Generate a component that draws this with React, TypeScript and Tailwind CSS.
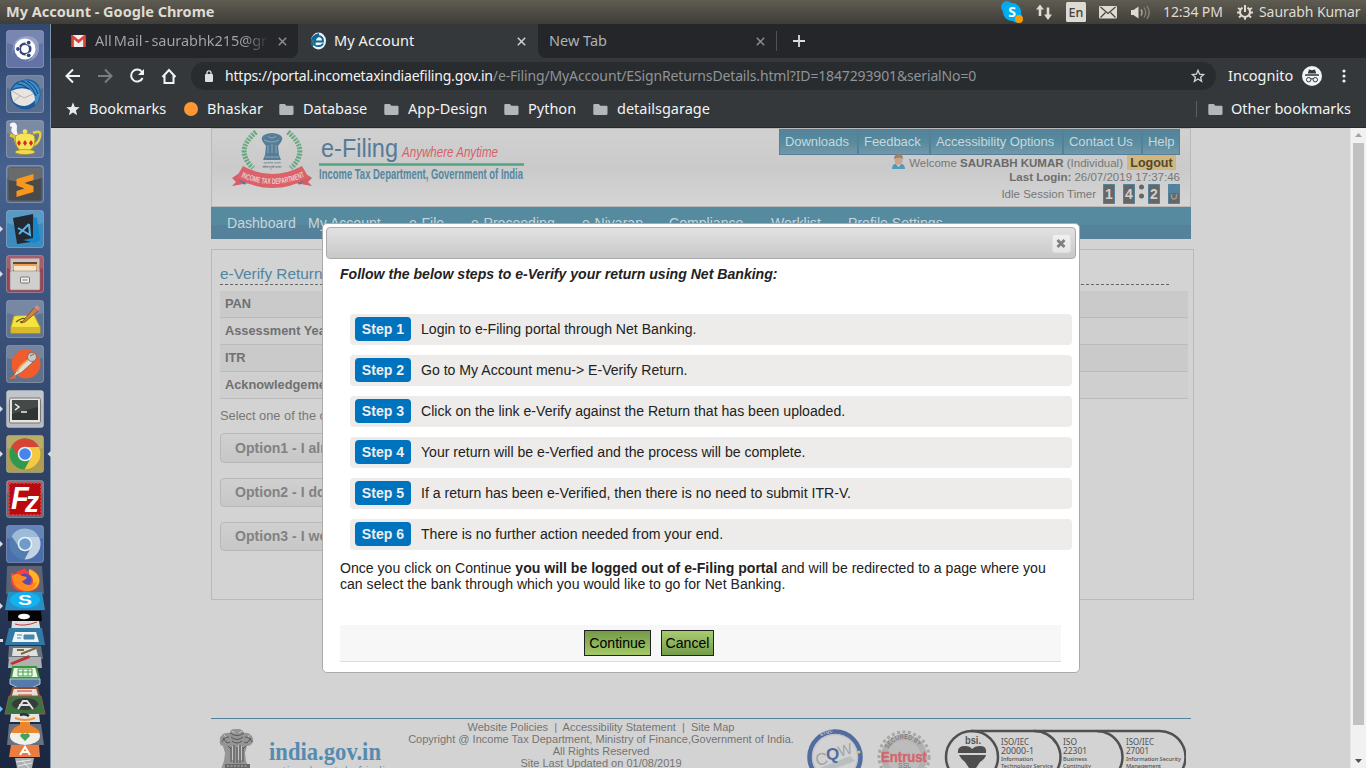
import React from "react";

const ui = "font-['Noto_Sans',sans-serif]";

function Folder() {
  return (
    <svg width="15" height="13" viewBox="0 0 15 13" className="shrink-0">
      <path d="M1.5 1h4.3l1.6 1.7h5.9c.7 0 1.2.5 1.2 1.2v6.9c0 .7-.5 1.2-1.2 1.2H1.5C.8 12 .3 11.500.3 10.800V2.200C.3 1.500.8 1 1.500 1z" fill="#b5b6b8" />
    </svg>
  );
}

function TabClose({ dim }: { dim?: boolean }) {
  return (
    <svg width="9" height="9" viewBox="0 0 9 9" className="shrink-0">
      <path d="M.8.8l7.400 7.400M8.200.8L.8 8.200" stroke={dim ? "#8b8d90" : "#d0d2d4"} strokeWidth="1.500" />
    </svg>
  );
}

function SystemBar() {
  return (
    <header className={`flex h-6 shrink-0 items-center bg-linear-to-b from-[#5f5c52] to-[#3e3d38] text-[#dfdbd2] ${ui}`}>
      <div className="w-[1001px] pl-[6px] text-[14.500px] font-bold">My Account - Google Chrome</div>
      <svg width="162" height="24" viewBox="1001 0 162 24" className="shrink-0">
        <circle cx="1007" cy="7" r="6" fill="#0aa5e8" />
        <circle cx="1016.500" cy="17" r="5.500" fill="#0aa5e8" />
        <circle cx="1012" cy="12" r="9" fill="#00aff0" />
        <text x="1012" y="17" textAnchor="middle" fontFamily="Noto Sans, sans-serif" fontWeight="700" fontSize="14" fill="#fff">S</text>
        <circle cx="1019" cy="19" r="4" fill="#f79a0b" />
        <path d="M1036 9.500l4-5 4 5h-2.700V16h-2.600V9.500zM1044 14.500h2.700V7.500h2.600v7h2.700l-4 5.500z" fill="#dfdbd2" />
        <rect x="1066" y="2" width="20" height="20" rx="1.500" fill="#dfdbd2" />
        <text x="1076" y="17" textAnchor="middle" fontFamily="Noto Sans, sans-serif" fontSize="12.500" fontWeight="500" fill="#45433d">En</text>
        <rect x="1099" y="6" width="18" height="12.500" rx="1" fill="#dfdbd2" />
        <path d="M1100.500 7l7.500 6.500 7.500-6.500M1100.500 17.500l5-5M1115.500 17.500l-5-5" fill="none" stroke="#45433d" strokeWidth="1.200" />
        <path d="M1131 10h2.500l5-3.500v12l-5-3.500H1131z" fill="#dfdbd2" />
        <path d="M1141 9.500q2 3 0 6" fill="none" stroke="#aaa79f" strokeWidth="1.500" />
        <path d="M1144 7.500q3.500 5 0 10M1147 6q4.500 6.500 0 13" fill="none" stroke="#85827a" strokeWidth="1.300" />
      </svg>
      <div className="w-[74px] whitespace-nowrap pb-[2px] text-[14px] tracking-[-0.100px]">12:34 PM</div>
      <svg width="16" height="16" viewBox="0 0 16 16" className="shrink-0">
        <path d="M5.500 3.600a5 5 0 1 0 5 0" fill="none" stroke="#dfdbd2" strokeWidth="2" />
        <path d="M8 1v7M1 4l2.500 1.500M15 4l-2.500 1.500M0 8.500h3M16 8.500h-3M2 13.500l2.200-2M14 13.500l-2.200-2M8 15.800v-3" fill="none" stroke="#dfdbd2" strokeWidth="2" />
      </svg>
      <div className="ml-[6px] whitespace-nowrap pb-[2px] text-[14px] tracking-[-0.070px]">Saurabh Kumar</div>
    </header>
  );
}

function Tile({ bg, children, mark, active }: { bg: string; children: React.ReactNode; mark?: boolean; active?: boolean }) {
  return (
    <div className="flex h-[38px] w-[51px] shrink-0 items-center">
      <svg width="51" height="38" viewBox="-6 0 51 38">
        <rect x=".5" y=".5" width="37" height="37" rx="2.500" fill={bg} stroke="#ffffff" strokeOpacity=".28" />
        <path d="M1 2q0-1 1-1h34q1 0 1 1v11Q19 20 1 13z" fill="#fff" fillOpacity=".14" />
        {children}
        {mark && <path d="M-6 16l3 3-3 3z" fill="#d8dce4" />}
        {active && <path d="M45 16l-3.500 3 3.500 3z" fill="#d8dce4" />}
      </svg>
    </div>
  );
}

function ChromeDisc({ a, b, c, d }: { a: string; b: string; c: string; d: string }) {
  return (
    <g>
      <circle cx="19" cy="19" r="15.500" fill={b} />
      <path d="M19 12h13.900A15.500 15.500 0 0 1 18.500 34.500L25 22.500z" fill={c} />
      <path d="M5.600 11.200A15.500 15.500 0 0 1 32.900 12H19a7 7 0 0 0-6.600 9z" fill={a} />
      <circle cx="19" cy="19" r="7.300" fill="#eef2f5" />
      <circle cx="19" cy="19" r="5.800" fill={d} />
    </g>
  );
}

function Launcher() {
  return (
    <aside className="flex w-[51px] shrink-0 flex-col gap-[7px] border-r border-[#7e94ae] bg-linear-to-b from-[#31486f] via-[#46618f] via-20% to-[#1b2740] pt-[6px]">
      <Tile bg="#6373a5">
        <path d="M7 27Q4 8 20 6q14 0 13 14-2 11-15 12 12-3 11-14Q26 8 16 10 6 13 7 27z" fill="#a7b2d2" opacity=".65" />
        <circle cx="19" cy="19" r="10.500" fill="#fff" />
        <circle cx="19" cy="19" r="5.200" fill="none" stroke="#33457a" strokeWidth="2.600" />
        <path d="M14 19h-3M21.500 14.600l1-1.800M21.500 23.400l1 1.800" stroke="#fff" strokeWidth="5" />
        <circle cx="12" cy="19" r="1.900" fill="#33457a" />
        <circle cx="22.700" cy="12.700" r="1.900" fill="#33457a" />
        <circle cx="22.700" cy="25.300" r="1.900" fill="#33457a" />
      </Tile>
      <Tile bg="#586d90">
        <path d="M4 18Q5 7 17 5q10-3 16 6 4 11-2 18-6 7-15 5Q4 30 4 18z" fill="#1c5b9b" />
        <path d="M6 14Q14 3 25 6q9 4 9 14-1 6-5 11 0-13-6-18-7-3-17 1z" fill="#3b8cca" />
        <path d="M15 6q10 2 15 15M21 6q8 4 11 13M11 9q11 0 17 14" stroke="#183f70" fill="none" />
        <path d="M5 16q10-5 19-1 5 4 5 10-4 5-10 6-8 0-12-5-2-5-2-10z" fill="#e9e4df" />
        <path d="M6 16l12 7 9-4M8 26l6-5" fill="none" stroke="#bbb3ad" />
      </Tile>
      <Tile bg="#677896">
        <path d="M11 16Q3 13 6 7 2 6 5 3q5-2 6 3-1 5 1 9z" fill="#f5f5fb" />
        <path d="M27 13q9-4 7 4-2 8-9 9" fill="none" stroke="#e6cf40" strokeWidth="2.500" />
        <path d="M4 15l5 2q1 8 6 11" fill="none" stroke="#dfc337" strokeWidth="3" />
        <path d="M9 19q0-6 10-6t10 6q0 10-7 12h-7q-5-3-6-12z" fill="#f5e458" stroke="#b69624" />
        <ellipse cx="19" cy="32" rx="10" ry="2.500" fill="#efdb50" stroke="#a78a20" strokeWidth=".7" />
        <circle cx="19" cy="11.500" r="2.300" fill="#f3e36e" />
        <path d="M13 20l2 3-2 3-2-3zM19 20l2 3-2 3-2-3zM25 20l2 3-2 3-2-3z" fill="#d52822" />
      </Tile>
      <Tile bg="#55647f">
        <rect x="2.500" y="2.500" width="33" height="33" rx="2" fill="#484a4b" />
        <path d="M2.500 3h33v10q-17 6-33 2z" fill="#696b6c" />
        <path d="M10.500 14l17-5v6l-9 3 9 3v6l-17 5v-6l8-2.500-8-3z" fill="#f8961e" />
      </Tile>
      <Tile bg="#3d8bbd" mark>
        <path d="M7 8l20-4 2 26-4 2-14 2z" fill="#242931" />
        <path d="M27 7l4 1 3 22-5 3-12-3 10-2z" fill="#1587cf" />
        <path d="M23 14l1 11-12-7M23 14L13 24" fill="none" stroke="#54b4ed" strokeWidth="2" />
      </Tile>
      <Tile bg="#984354" mark>
        <path d="M6 5h26l2 8H4z" fill="#63463c" />
        <path d="M7 9h24v6H7z" fill="#f1a04e" />
        <path d="M8 11h22v5H8z" fill="#fae4c8" />
        <rect x="4" y="16" width="30" height="19" rx="1.500" fill="#d0cfcd" stroke="#888" strokeWidth=".6" />
        <path d="M4.500 3.500h29v13H31V7H7v9.500H4.500z" fill="#c5c5c3" />
        <rect x="14.500" y="22" width="9" height="6" rx="1" fill="#eee" stroke="#777" />
        <path d="M16.500 25h5" stroke="#777" />
      </Tile>
      <Tile bg="#607594">
        <path d="M8 16l20-1 6 12v6H5v-6z" fill="#f5e340" stroke="#bfa320" />
        <path d="M5 27h29v6H5z" fill="#d7b929" />
        <path d="M10 22q7-5 9-3t-5 3" fill="none" stroke="#655923" strokeWidth="1.300" />
        <path d="M16 22l12-14 4 3-13 11-4 1z" fill="#cc8540" stroke="#704024" strokeWidth=".7" />
        <path d="M28 8l3-3 3 3-2 3z" fill="#dd8583" />
      </Tile>
      <Tile bg="#60718d">
        <circle cx="20" cy="19" r="14.500" fill="#f05c2d" />
        <path d="M7 32q4-8 8-12l8-7 4 4-11 10z" fill="#dedfda" stroke="#7e5c51" strokeWidth=".7" />
        <path d="M11 27q3-7 11-12" stroke="#f5a14a" strokeWidth="2" fill="none" />
        <circle cx="26" cy="12" r="4.500" fill="#c8c9c6" stroke="#696969" strokeWidth=".8" />
        <path d="M24 11l4-2" stroke="#666" /><path d="M3 34l5-4 3 3z" fill="#ef6532" />
      </Tile>
      <Tile bg="#b9bdc2" mark>
        <rect x="3.500" y="8" width="31" height="25" rx="1.500" fill="#e4e4e0" stroke="#777" />
        <rect x="6" y="10" width="26" height="20" fill="#303432" />
        <path d="M6 10h26v7L6 24z" fill="#454a48" />
        <path d="M9 14l4 3-4 3M15 22h6" fill="none" stroke="#eee" strokeWidth="1.500" />
      </Tile>
      <Tile bg="#af9e50" mark active><ChromeDisc a="#d94335" b="#31984e" c="#f6c841" d="#4384ed" /></Tile>
      <Tile bg="#636979">
        <rect x="3" y="3" width="32" height="32" fill="#b80b10" stroke="#d83d42" strokeWidth="2" strokeDasharray="2 1.500" />
        <text x="5" y="29" fontFamily="Liberation Sans, sans-serif" fontSize="31" fontWeight="700" fontStyle="italic" fill="#fff" textLength="28" lengthAdjust="spacingAndGlyphs">F<tspan dx="-4" dy="3" fontSize="30">z</tspan></text>
      </Tile>
      <Tile bg="#4b6fae" mark><ChromeDisc a="#9dbbd9" b="#537dae" c="#c2d4e4" d="#6e9dcc" /></Tile>
      <svg width="51" height="202" viewBox="0 566 51 202" className="-mt-[4px] shrink-0">
        <path d="M7 567q0-1 1-1h34l2 28H6z" fill="#5b6375" />
        <path d="M11 573l4 1q3-4 7-4l3-2q0 3 4 3l2-2q9 4 9 12-1 11-15 11-14-1-14-13 0-3 0-6z" fill="#f5443c" />
        <path d="M29 569q12 5 10 14-3 8-13 8 8-4 7-11-1-4-4-6z" fill="#fdb52b" />
        <circle cx="25" cy="580" r="6.500" fill="#5a4bb4" />
        <path d="M12 576q6-4 10 0l5 1q-1 3-5 4 2 4 8 4 5-1 7-5-1 11-12 11-12-2-13-15z" fill="#ff8a1f" />
        <path d="M8 592h34l3 18H5z" fill="#2a8fc2" />
        <ellipse cx="25" cy="600" rx="15" ry="8" fill="#13b1ee" />
        <text x="25" y="605" textAnchor="middle" fontFamily="Liberation Sans, sans-serif" fontSize="15" fontWeight="700" fill="#fff" textLength="14" lengthAdjust="spacingAndGlyphs">S</text>
        <path d="M8 611h33l1 10H8z" fill="#050505" />
        <ellipse cx="24" cy="616.500" rx="6" ry="2.800" fill="#fff" />
        <path d="M12 621h27l2 12H11z" fill="#dcdedf" />
        <path d="M15 624q9 3 22-2" stroke="#b64143" fill="none" />
        <path d="M9 628h33l3 17H5z" fill="#327aa5" />
        <path d="M15 632h21l3 10H12z" fill="#eff4f6" />
        <path d="M17 635h5M17 638h4M24 635h10v4H24z" stroke="#4786ad" fill="#4786ad" />
        <path d="M9 646h32l2 13H8z" fill="#69717d" />
        <path d="M13 648h23l2 8H12z" fill="#dfe1de" />
        <path d="M21 654l15-6M17 650h7" stroke="#7c6a43" strokeWidth="2" />
        <path d="M9 657h32l1 11H8z" fill="#aeb0b2" />
        <path d="M10 663l19-8 1 3-18 7z" fill="#b93432" />
        <path d="M13 667h23l3 11H11z" fill="#eef4e9" stroke="#39963f" strokeWidth="2" />
        <path d="M18 669h14v7H18zM23 669v7M28 669v7M18 672h14" fill="none" stroke="#43a548" />
        <path d="M10 679h30v5l-15 7-15-7z" fill="#577aac" stroke="#b6c8df" />
        <path d="M13 688h24l3 11H10z" fill="#e4dfd7" stroke="#8e4c32" strokeWidth="2" />
        <path d="M17 691h15M18 695h14" stroke="#d3735a" strokeWidth="1.500" />
        <path d="M9 696h32l4 18H5z" fill="#3d7141" stroke="#87604b" />
        <ellipse cx="25" cy="704" rx="13" ry="6" fill="#383b3b" />
        <path d="M18 709l5-8h4l6 8M19 705h11" stroke="#e0e1df" strokeWidth="2" fill="none" />
        <path d="M11 714h28l1 8H10z" fill="#e5e5e2" />
        <path d="M20 715q5-2 9 1" stroke="#303030" strokeWidth="2.500" fill="none" />
        <path d="M15 718q10 4 20 0" stroke="#ed9235" fill="none" strokeWidth="2" />
        <path d="M9 724h32l3 21H7z" fill="#697180" />
        <ellipse cx="25" cy="736" rx="15" ry="9" fill="#f0f0e9" />
        <path d="M11 733q2-6 9-8v-3h10v3q9 4 10 8z" fill="#ed852f" />
        <path d="M25 741l-5-5q1-4 5-2 4-2 5 2z" fill="#43a35b" />
        <path d="M11 745h28l1 12H9z" fill="#eb7d43" />
        <path d="M20 755l5-8 5 8M21 752h8" stroke="#fff" strokeWidth="2" fill="none" />
        <path d="M15 758h19l-2 10H17z" fill="#acb0b2" />
        <path d="M16 762l15-2M18 766l14-3M22 760l7 8" stroke="#e6e6e6" />
        <path d="M0 603l3 3-3 3zM0 639h3v3H0z" fill="#d8dce4" />
        <path d="M0 706l3 3-3 3z" fill="#66c5ee" />
      </svg>
    </aside>
  );
}

function Browser() {
  const marks = ["Database", "App-Design", "Python", "detailsgarage"];
  const spacing = ["w-[105px]", "w-[120px]", "w-[89px]", "w-[140px]"];
  return (
    <div className={`flex h-[104px] shrink-0 flex-col border-b border-[#28292b] bg-[#35383b] text-[#f1f3f4] ${ui}`}>
      <div className="flex h-[34px] bg-[#35383b] text-[14.500px]">
        <div className="flex w-[247px] items-center rounded-br-lg bg-[#242629] pl-[20px] text-[#a3a7ab]">
          <svg width="15" height="12" viewBox="0 0 15 12"><rect x="1" width="13" height="12" fill="#eee" /><path d="M1.500 12V1.500l6 5 6-5V12" fill="none" stroke="#dc4438" strokeWidth="2.700" /></svg>
          <div className="ml-[9px] w-[175px] whitespace-nowrap bg-linear-to-r from-[#a3a7ab] from-85% to-[#242629] bg-clip-text tracking-[-0.050px] text-transparent [word-spacing:-1.500px]">All Mail - saurabhk215@gr</div>
          <div className="ml-[8px] flex"><TabClose dim /></div>
        </div>
        <div className="flex w-[240px] items-center rounded-t-lg pl-[12px]">
          <svg width="17" height="18" viewBox="0 0 17 18"><ellipse cx="8.500" cy="9" rx="7.500" ry="8.500" fill="#e9f5fa" /><path d="M5 9.500h8q0-5-4-5.500-5 0-5 5.500T9 14q3 0 4-2.500M5 12q-2-4 3-8M3 14Q-1 5 9 2" fill="none" stroke="#12658f" strokeWidth="1.900" /></svg>
          <div className="ml-[7px] w-[183px] tracking-[0.100px]">My Account</div>
          <TabClose />
        </div>
        <div className="flex flex-1 items-center rounded-bl-lg bg-[#242629] pl-[11px] text-[#aeb2b5]">
          <div className="w-[207px]">New Tab</div>
          <TabClose dim />
          <div className="ml-[11px] h-5 w-px bg-[#505257]" />
          <svg className="ml-[15px]" width="14" height="14" viewBox="0 0 14 14"><path d="M7 1v12M1 7h12" stroke="#dadcde" strokeWidth="1.800" /></svg>
        </div>
      </div>
      <div className="flex h-[36px] items-center">
        <svg width="140" height="36" viewBox="51 58 140 36" className="shrink-0" fill="none" stroke="#f1f3f4" strokeWidth="2">
          <path d="M80 76H67M73 69.500L66.500 76l6.500 6.500" />
          <path d="M98 76h13M105 69.500l6.500 6.500-6.500 6.500" stroke="#797c80" />
          <path d="M142 72a6 6 0 1 0 .6 6" /><path d="M144 69v6h-6z" fill="#f1f3f4" stroke="none" />
          <path d="M162.500 77l6.500-7 6.500 7M164.500 75.500V83h9v-7.500" />
        </svg>
        <div className="flex h-7 w-[1025px] items-center rounded-full bg-[#292c2f] pl-[14px]">
          <svg width="8" height="12" viewBox="0 0 8 12"><rect y="4" width="8" height="8" rx="1" fill="#dedfe1" /><path d="M2 4V2.800a2 2 0 0 1 4 0V4" fill="none" stroke="#dedfe1" strokeWidth="1.300" /></svg>
          <div className="ml-[12px] w-[966px] whitespace-nowrap pb-[2px] text-[14px] text-[#8f9498]"><span className="text-[#f1f3f4] tracking-[-0.200px]">https://portal.incometaxindiaefiling.gov.in</span><span className="tracking-[-0.145px]">/e-Filing/MyAccount/ESignReturnsDetails.html?ID=1847293901&amp;serialNo=0</span></div>
          <svg width="14" height="14" viewBox="0 0 14 14"><path d="M7 1.300l1.600 3.900 4.200.3-3.200 2.700 1 4.100L7 10l-3.600 2.300 1-4.100L1.200 5.500l4.200-.3z" fill="none" stroke="#d3d5d7" strokeWidth="1.300" /></svg>
        </div>
        <div className="ml-[12px] w-[74px] text-[14.500px]">Incognito</div>
        <svg width="20" height="20" viewBox="0 0 20 20"><circle cx="10" cy="10" r="10" fill="#f2f3f4" /><path d="M7 3.500l3 .8 3-.8 1.200 4H5.800zM3 8.300h14v1.500H3z" fill="#35383b" /><path d="M9 13q1-.7 2 0" stroke="#35383b" fill="none" /><circle cx="6.700" cy="13.700" r="2.200" fill="none" stroke="#35383b" /><circle cx="13.300" cy="13.700" r="2.200" fill="none" stroke="#35383b" /></svg>
        <svg className="ml-[20px]" width="4" height="14" viewBox="0 0 4 14" fill="#eee"><circle cx="2" cy="2" r="1.600" /><circle cx="2" cy="7" r="1.600" /><circle cx="2" cy="12" r="1.600" /></svg>
      </div>
      <div className="flex h-[30px] items-center pl-[15px] text-[14.500px]">
        <svg width="14" height="14" viewBox="0 0 14 14"><path d="M7 .3l1.800 4.600 4.900.3-3.800 3.200 1.200 4.900L7 10.600l-4.100 2.700 1.200-4.900L.3 5.200l4.900-.3z" fill="#e8eaed" /></svg>
        <div className="ml-[9px] w-[94px]">Bookmarks</div>
        <svg width="16" height="16" viewBox="0 0 16 16"><circle cx="8" cy="8" r="7" fill="#fd9733" /></svg>
        <div className="ml-[8px] w-[72px] tracking-[0.100px]">Bhaskar</div>
        {marks.map((m, i) => <div key={m} className={`flex items-center gap-[9px] ${spacing[i]}`}><Folder /><span>{m}</span></div>)}
        <div className="ml-auto mr-[11px] h-4 w-px bg-[#5d6063]" />
        <Folder />
        <div className="ml-[8px] w-[135px] whitespace-nowrap">Other bookmarks</div>
      </div>
    </div>
  );
}

function Emblem() {
  return (
    <svg width="84" height="62" viewBox="230 128 84 62" className="shrink-0">
      <path d="M256 131q-22 18-3 36M288 131q22 18 3 36" stroke="#62a77f" strokeWidth="5" strokeDasharray="2 1.200" fill="none" />
      <path d="M252 132q-17 18 3 34M292 132q17 18-3 34" stroke="#8db99a" strokeWidth="1.500" strokeDasharray="1.500 2" fill="none" />
      <path d="M263 141q-3-4 1-7 4-2 8-2t8 2q4 3 1 7l-3 4 1 9h-14l1-9zM265 154h14l2 5h-18z" fill="#557d98" />
      <path d="M268 135q4 4 8 0M264 139q8 4 15 0M268 144v8M272 143v9M276 144v8M265 156h14" stroke="#a9b9c0" strokeWidth=".7" fill="none" />
      <text x="272" y="162.500" textAnchor="middle" fontFamily="Noto Sans, sans-serif" fontSize="3.500" fill="#557d98">सत्यमेव जयते</text>
      <text x="272" y="166.500" textAnchor="middle" fontFamily="Noto Sans, sans-serif" fontSize="3.500" fill="#555">कोष मूलो दण्डः</text>
      <path d="M232 177l12-8 5 13-17 3 4-4zM312 177l-12-8-5 13 17 3-4-4z" fill="#d55d65" />
      <path d="M236 176l9 8 2-7zM308 176l-9 8-2-7z" fill="#4b7796" />
      <path d="M243 165q29 16 59 0l7 12q-37 20-73 0z" fill="#dc6269" />
      <path id="ribbon" d="M240 175.500q32 15 65 0" fill="none" />
      <text fontFamily="Liberation Sans, sans-serif" fontWeight="700" fontSize="8" fill="#e9cecc"><textPath href="#ribbon" startOffset="1" textLength="66" lengthAdjust="spacingAndGlyphs">INCOME TAX DEPARTMENT</textPath></text>
    </svg>
  );
}

function PortalHeader() {
  const menu: [string, string][] = [["Downloads", "w-[79px]"], ["Feedback", "w-[72px]"], ["Accessibility Options", "w-[133px]"], ["Contact Us", "w-[79px]"], ["Help", "w-[36px]"]];
  return (
    <div className="flex h-[79px] justify-between border border-[#b9b9b9] bg-linear-to-b from-[#d1d1d1] via-[#cacaca] to-[#d5d5d5] pr-[10px] pl-[18px]">
      <div className="flex">
        <Emblem />
        <svg width="210" height="62" viewBox="314 129 210 62" className="overflow-visible" fontFamily="Liberation Sans, sans-serif">
          <text x="321" y="157" fontSize="25" fill="#557b99" textLength="77" lengthAdjust="spacingAndGlyphs">e-Filing</text>
          <text x="402" y="157" fontSize="14" fontStyle="italic" fill="#d75f67" textLength="96" lengthAdjust="spacingAndGlyphs">Anywhere Anytime</text>
          <path d="M319 164.500h205" stroke="#51a583" strokeWidth="2.500" />
          <text x="319" y="179" fontSize="14.500" fontWeight="700" fill="#5587a0" textLength="204" lengthAdjust="spacingAndGlyphs">Income Tax Department, Government of India</text>
        </svg>
      </div>
      <div className="flex flex-col items-end text-[11.500px] text-[#777]">
        <div className="flex h-[26px] border border-[#55809a] bg-linear-to-b from-[#558299] via-[#568c9f] to-[#7496a8] text-[13px] leading-[24px] text-[#c9d7de]">
          {menu.map(([m, w], i) => <div key={m} className={`whitespace-nowrap pl-[5px] tracking-[-0.050px] ${w} ${i < 4 ? "border-r-2 border-[#55809a]" : ""}`}>{m}</div>)}
        </div>
        <div className="mr-[4px] flex h-[15px] items-center whitespace-nowrap">
          <svg width="15" height="15" viewBox="0 0 15 15" className="mr-[3px] mb-[3px]"><path d="M1 15q0-6 6-5 7-1 7 5z" fill="#519bb9" /><path d="M5 10l2.500 3L10 10z" fill="#ddd" /><ellipse cx="7.500" cy="6" rx="4" ry="5" fill="#cda38e" /><path d="M3 5q0-5 5-5 4 0 4 5-3-3-9 0z" fill="#9d826f" /></svg>
          <span className="pt-[2px]">Welcome <b className="text-[#696969]">SAURABH KUMAR</b> (Individual)</span>
          <b className="ml-[4px] h-[15px] w-[49px] bg-[#d1b77d] text-center text-[12.500px] leading-[16px] text-[#51472f]">Logout</b>
        </div>
        <div className="h-[14px] leading-[14px]"><b className="text-[#6d6d6d]">Last Login:</b> 26/07/2019 17:37:46</div>
        <div className="flex h-5 items-center">
          <span className="mr-[7px] whitespace-nowrap pt-[2px]">Idle Session Timer</span>
          <svg width="77" height="20" viewBox="0 0 77 20" fontFamily="Liberation Sans, sans-serif" fontSize="14" fontWeight="700" fill="#d0d0d0" className="overflow-visible">
            <g fill="#666" stroke="#51839c"><path d="M.5.5h11v19H.5zM20.500.5h11v19h-11zM45.500.5h11v19h-11zM65.500.5h11v19h-11z" /></g>
            <path d="M66 1h10v8H66z" fill="#51839c" />
            <text x="2" y="15">1</text><text x="22" y="15">4</text><text x="47" y="15">2</text><path d="M68.500 10v2q0 3 2.500 3t2.500-3v-2" fill="none" stroke="#969696" strokeWidth="1.500" />
            <circle cx="38.500" cy="3" r="2.500" fill="#656565" /><circle cx="38.500" cy="12" r="2.500" fill="#656565" />
          </svg>
        </div>
      </div>
    </div>
  );
}

function PortalNav() {
  const items: [string, string][] = [["Dashboard", "w-[81px]"], ["My Account", "w-[101px]"], ["e-File", "w-[62px]"], ["e-Proceeding", "w-[111px]"], ["e-Nivaran", "w-[87px]"], ["Compliance", "w-[102px]"], ["Worklist", "w-[77px]"], ["Profile Settings", "w-[110px]"]];
  return <nav className="flex h-8 bg-linear-to-b from-[#568b9f] from-55% to-[#55819a] to-55% pl-4 text-[14.080px] leading-8 text-[#c7d5dc]">{items.map(([t, w]) => <div key={t} className={`shrink-0 whitespace-nowrap ${w}`}>{t}</div>)}</nav>;
}

function EVerify() {
  return (
    <main className="mt-[10px] h-[351px] w-[983px] border border-[#b9b9b9] px-2 pt-[15px] text-[#777]">
      <h1 className="mr-[16px] h-[20px] border-b border-dashed border-[#666] text-[15.360px] leading-[18px] text-[#5085a0]">e-Verify Return</h1>
      <div className="mt-[6px] mr-[-3px] text-[12.800px] font-bold text-[#707070]">
        {["PAN", "Assessment Year", "ITR", "Acknowledgement Number"].map((t, i) => <div key={t} className={`h-[27px] border-b border-[#bbb] pl-[5px] leading-[26px] ${i % 2 ? "bg-[#cfcfcf]" : "bg-[#cacaca]"}`}>{t}</div>)}
      </div>
      <p className="mt-[7px] mb-[8px] h-[19px] text-[12.800px] leading-[19px]">Select one of the options below</p>
      <div className="flex w-[600px] flex-col text-[14.080px] font-bold text-[#828282]">
        {["Option1 - I already have an EVC", "Option2 - I do not have an EVC", "Option3 - I would like to use Aadhaar OTP"].map((t, i) => <div key={t} className={`rounded border border-[#b8b8b8] bg-linear-to-b from-[#d0d0d0] to-[#c7c7c7] pl-[14px] ${i === 0 ? "mb-[15px] h-[30px] leading-[28px]" : "mb-[15px] h-[29px] leading-[27px]"}`}>{t}</div>)}
      </div>
    </main>
  );
}

function FooterSeals() {
  return (
    <svg width="382" height="49" viewBox="804 719 382 49" className="shrink-0" fontFamily="Liberation Sans, sans-serif">
      <circle cx="835" cy="757" r="25.500" fill="#d2d2d2" stroke="#526c9f" strokeWidth="4.500" />
      <circle cx="835" cy="757" r="22.500" fill="none" stroke="#b6bcc9" />
      <path id="seal" d="M821 736.500A24.500 24.500 0 0 1 846 735" fill="none" />
      <text fontSize="4.500" fontWeight="700" fill="#c7cbd2"><textPath href="#seal">STQC</textPath></text>
      <path d="M820 768l30-12 5 5-24 9z" fill="#b8bfc1" />
      <text x="815.500" y="765" fontSize="17" fill="#a5a5a5" transform="rotate(-12 821 760)">C</text><text x="826" y="760" fontSize="17" fontWeight="700" fill="#526c9f">Q</text><text x="838" y="755" fontSize="15" fill="#a5a5a5" transform="rotate(-16 845 750)">W</text>
      <circle cx="859" cy="752" r="1.500" fill="#d4c95b" />
      <circle cx="904" cy="757" r="23" fill="#b0b0b0" />
      <circle cx="904" cy="757" r="25" fill="none" stroke="#a6a6a6" strokeWidth="3" strokeDasharray="3 2.500" />
      <circle cx="904" cy="757" r="17" fill="#bcbcbc" />
      <path id="secure" d="M888 749A18 18 0 0 1 920.500 749" fill="none" /><text fontSize="6.500" fill="#686868"><textPath href="#secure" textLength="37" lengthAdjust="spacingAndGlyphs">SECURED BY</textPath></text>
      <text x="881" y="761.500" fontSize="15" fontWeight="700" fill="#d5656b" stroke="#d5656b" strokeWidth=".4" textLength="46" lengthAdjust="spacingAndGlyphs">Entrust</text>
      <text x="898" y="768" fontSize="7" fill="#777">SSL</text>
      <g fill="none" stroke="#505050" strokeWidth="2.500"><path d="M971 731h187A26 26 0 0 1 1182 770" /><circle cx="972" cy="757" r="26" /><path d="M1034 731A26 26 0 0 1 1057 770M1097 731A26 26 0 0 1 1119 770" /></g>
      <text x="965" y="744" fontSize="11" fontWeight="600" fill="#555" textLength="16" lengthAdjust="spacingAndGlyphs">bsi.</text>
      <path d="M958 753q-1-7 7-7 5 0 7 3 3-3 8-3 7 0 6 7zM959 755h27q-1 4-6 7l-4 6h-7l-4-6q-4-3-6-7z" fill="#4e4e4e" />
      <g fontFamily="Noto Sans, sans-serif" fill="#505050">
        <g fontSize="9"><text x="1001" y="744.500" textLength="28" lengthAdjust="spacingAndGlyphs">ISO/IEC</text><text x="1001" y="754" textLength="33" lengthAdjust="spacingAndGlyphs">20000-1</text><text x="1063" y="744.500" textLength="14" lengthAdjust="spacingAndGlyphs">ISO</text><text x="1063" y="754" textLength="24" lengthAdjust="spacingAndGlyphs">22301</text><text x="1126" y="744.500" textLength="28" lengthAdjust="spacingAndGlyphs">ISO/IEC</text><text x="1126" y="754" textLength="23" lengthAdjust="spacingAndGlyphs">27001</text></g>
        <g fontSize="5.700" fontWeight="500"><text x="1001" y="761" textLength="32">Information</text><text x="1001" y="768" textLength="52">Technology Service</text><text x="1063" y="761" textLength="24">Business</text><text x="1063" y="768" textLength="28">Continuity</text><text x="1126" y="761" textLength="55">Information Security</text><text x="1126" y="768" textLength="35">Management</text></g>
      </g>
    </svg>
  );
}

function Footer() {
  return (
    <footer className="mt-[118px] flex h-[50px] w-[980px] shrink-0 border-t border-[#52819a]">
      <svg width="186" height="49" viewBox="211 719 186 49" className="shrink-0">
        <path d="M220 741q-1-4 3-7 4-2 7-1 0-3 3-4h7q3 1 4 4 4-1 7 2 3 3 2 7-2 4-6 4l-2 7 1 8 3 8h-28l3-8 1-8-2-7q-4-1-3-5z" fill="#959595" />
        <path d="M222 742q2-5 7-5M252 742q-2-5-7-5M223 738l4 5 3-1M251 738l-4 5-3-1M230 733q7 5 14 0M231 737q6 5 12 0M232 741q5 4 10 0M231 747v15M234 745v18M237 747v16M240 745v18M243 747v15M228 746l3 3M246 746l-3 3" stroke="#4f4f4f" strokeWidth=".9" fill="none" />
        <path d="M232 731l3 2M242 731l-3 2M224 735l2 2M250 735l-2 2M232.500 746v14M238.500 745v15M241.500 746v14" stroke="#d0d0d0" strokeWidth=".8" fill="none" />
        <path d="M225 764h25v4h-25z" fill="#686868" /><path d="M227 766h21" stroke="#bdbdbd" strokeDasharray="2 1.500" />
        <text x="269" y="760" fontFamily="Liberation Serif, serif" fontSize="25" fontWeight="700" fill="#568bb1" textLength="112" lengthAdjust="spacingAndGlyphs">india.gov.in</text>
        <text x="270" y="773" fontFamily="Noto Sans, sans-serif" fontSize="9" fill="#568bb1" textLength="121">national portal of india</text>
      </svg>
      <div className="w-[408px] shrink-0 whitespace-nowrap pt-[2px] text-center text-[11.020px] leading-3 text-[#737373]">
        <p>Website Policies &nbsp;|&nbsp; Accessibility Statement &nbsp;|&nbsp; Site Map</p><p>Copyright @ Income Tax Department, Ministry of Finance,Government of India.</p><p>All Rights Reserved</p><p>Site Last Updated on 01/08/2019</p>
      </div>
      <div className="-ml-px flex"><FooterSeals /></div>
    </footer>
  );
}

const steps = ["Login to e-Filing portal through Net Banking.", "Go to My Account menu-> E-Verify Return.", "Click on the link e-Verify against the Return that has been uploaded.", "Your return will be e-Verfied and the process will be complete.", "If a return has been e-Verified, then there is no need to submit ITR-V.", "There is no further action needed from your end."];

function NetBankingDialog() {
  return (
    <section className="absolute top-[95px] left-[271px] flex h-[450px] w-[758px] flex-col rounded-[5px] border border-[#aaa] bg-white p-[3px] text-[14.080px] leading-4 text-[#222]">
      <div className="flex h-8 shrink-0 items-center justify-end rounded-[4px] border border-[#aaa] bg-linear-to-b from-[#e2e2e2] to-[#c8c8c8] pr-1">
        <button aria-label="Close" className="flex h-[19px] w-[19px] items-center justify-center rounded-[3px] border border-[#dfdfdf] bg-linear-to-b from-[#f1f1f1] to-[#e5e5e5]"><svg width="11" height="11" viewBox="0 0 11 11"><path d="M1.500 2l7 7M8.500 2l-7 7" stroke="#808080" strokeWidth="3" /></svg></button>
      </div>
      <div className="flex flex-col pt-[7px] pl-[14px]">
        <h2 className="font-bold italic">Follow the below steps to e-Verify your return using Net Banking:</h2>
        <ol className="mt-[32px] ml-[10px] flex w-[722px] flex-col gap-[10px]">
          {steps.map((s, i) => <li key={s} className="flex h-[31px] items-center rounded bg-[#edecea] pl-[5px]"><span className="mb-px flex h-6 w-14 items-center justify-center rounded bg-[#0073be] font-bold text-[#eee]">Step {i + 1}</span><span className="mb-[2px] ml-[10px]">{s}</span></li>)}
        </ol>
        <p className="mt-[10px] w-[712px]">Once you click on Continue <b>you will be logged out of e-Filing portal</b> and will be redirected to a page where you can select the bank through which you would like to go for Net Banking.</p>
        <div className="mt-[33px] flex h-[37px] w-[721px] gap-[10px] border-b border-[#ddd] bg-[#f7f7f7] pt-[5px] pl-[244px] text-black">
          <button className="h-[26px] w-[67px] border border-[#222] bg-linear-to-b from-[#749b49] to-[#a5c968]">Continue</button>
          <button className="h-[26px] w-[53px] border border-[#222] bg-linear-to-b from-[#a9cc70] to-[#749b49]">Cancel</button>
        </div>
      </div>
    </section>
  );
}

export default function App() {
  return (
    <div className="flex h-[768px] w-[1366px] flex-col overflow-hidden font-['Liberation_Sans',sans-serif]">
      <SystemBar />
      <div className="flex h-[744px]">
        <Launcher />
        <div className="flex w-[1315px] flex-col">
          <Browser />
          <div className="relative flex h-[640px] overflow-hidden bg-[#d3d3d3]">
            <div className="flex w-[1299px] flex-col pl-[160px]"><div className="w-[980px]"><PortalHeader /><PortalNav /></div><EVerify /><Footer /></div>
            <div className="flex w-4 flex-col items-center justify-between border-l border-[#e5e5e5] bg-[#f1f1f1]">
              <svg width="15" height="15" viewBox="0 0 15 15"><path d="M4 9l3.500-4L11 9z" fill="#a3a3a3" /></svg>
              <div className="mb-auto h-[582px] w-[11px] bg-[#c1c1c1]" />
              <svg width="15" height="15" viewBox="0 0 15 15"><path d="M4 6l3.500 4L11 6z" fill="#505050" /></svg>
            </div>
            <NetBankingDialog />
          </div>
        </div>
      </div>
    </div>
  );
}
